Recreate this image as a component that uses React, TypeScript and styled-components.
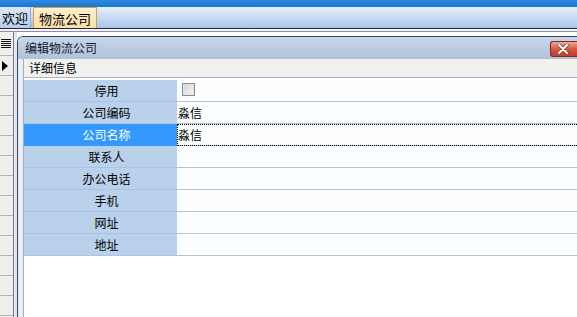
import React from 'react';
import styled, { createGlobalStyle, css } from 'styled-components';

const GlobalStyle = createGlobalStyle`
  html, body {
    margin: 0;
    padding: 0;
    width: 577px;
    height: 317px;
    overflow: hidden;
    background: #fff;
  }
  body {
    font-family: "Noto Sans CJK SC", "Liberation Sans", sans-serif;
    font-size: 12px;
    color: #000;
  }
  * { box-sizing: border-box; }
`;

const Page = styled.div`
  width: 577px;
  height: 317px;
  display: flex;
  flex-direction: column;
  overflow: hidden;
`;

const TopBand = styled.div`
  height: 7px;
  background: linear-gradient(#2f8be0, #1a76cf);
`;

const TabStrip = styled.div`
  height: 22px;
  display: flex;
  align-items: flex-end;
  background: linear-gradient(#e6effb, #a9c5eb);
  border-bottom: 1px solid #1b2a5a;
`;

const Tab = styled.div<{ $active?: boolean }>`
  height: 21px;
  padding: 0 2px;
  display: flex;
  align-items: center;
  font-size: 13px;
  line-height: 1;
  white-space: nowrap;
  ${(p) =>
    p.$active
      ? css`
          margin-left: 2px;
          padding: 0 5px;
          background: linear-gradient(#fff1cc, #fcdea4);
          border: 1px solid #d99a56;
          border-bottom: none;
        `
      : css`
          background: linear-gradient(#dce8f8, #b6cdee);
          border-right: 1px solid #8ea8cc;
        `}
`;

const Divider = styled.div`
  height: 3px;
  background: #fbf1f1;
  border-bottom: 1px solid #8a92a2;
`;

const Body = styled.div`
  flex: 1;
  display: flex;
  min-height: 0;
`;

const LeftPanel = styled.div`
  width: 14px;
  background: #efefef;
  border-right: 1px solid #7c7c7c;
  display: flex;
  flex-direction: column;
`;

const PanelCell = styled.div<{ $head?: boolean }>`
  height: ${(p) => (p.$head ? 24 : 20)}px;
  flex-shrink: 0;
  border-bottom: 1px solid #b4b4b4;
  display: flex;
  align-items: center;
  padding-left: 1px;
`;

const Splitter = styled.div`
  width: 3px;
  background: #dfe8f2;
`;

const MdiArea = styled.div`
  flex: 1;
  padding-top: 4px;
  background: #fff;
  display: flex;
  min-width: 0;
`;

const Dialog = styled.div`
  flex: 1;
  display: flex;
  flex-direction: column;
  border-left: 1px solid #3c4858;
  border-top: 1px solid #3c4858;
  border-top-left-radius: 6px;
  min-width: 0;
`;

const TitleBar = styled.div`
  height: 22px;
  flex-shrink: 0;
  display: flex;
  align-items: flex-start;
  justify-content: space-between;
  padding-left: 7px;
  border-top-left-radius: 5px;
  background: linear-gradient(#c9d7e9, #aec2da);
`;

const TitleText = styled.span`
  font-size: 12px;
  line-height: 22px;
  color: #0f1a2a;
`;

const CloseButton = styled.div`
  width: 27px;
  height: 16px;
  margin-top: 4px;
  display: flex;
  align-items: center;
  justify-content: center;
  border: 1px solid #7d2b1e;
  border-right: none;
  border-radius: 3px 0 0 3px;
  background: linear-gradient(#eeaa9c, #d4583f 50%, #bf3f2a);
  padding-right: 3px;
`;

const DialogBody = styled.div`
  flex: 1;
  display: flex;
  min-height: 0;
`;

const Frame = styled.div`
  width: 6px;
  background: #e8eff8;
  border-right: 1px solid #a2acba;
`;

const Content = styled.div`
  flex: 1;
  display: flex;
  flex-direction: column;
  background: #fff;
  min-width: 0;
`;

const GroupHeader = styled.div`
  height: 19px;
  flex-shrink: 0;
  padding-left: 5px;
  background: #f0f0ec;
  border-bottom: 1px solid #a9b4c4;
  font-size: 12px;
  line-height: 18px;
`;

/* the grid runs on past the window edge, as in the reference */
const Grid = styled.div`
  margin-top: 2px;
  margin-right: -12px;
  display: grid;
  grid-template-columns: 153px 1fr;
`;

const LabelCell = styled.div<{ $selected?: boolean }>`
  height: 22px;
  padding-left: 12px;
  text-align: center;
  line-height: 21px;
  background: ${(p) => (p.$selected ? '#3399ff' : '#b9d1ea')};
  color: ${(p) => (p.$selected ? '#fff' : '#000')};
  border-bottom: 1px solid ${(p) => (p.$selected ? '#3399ff' : '#a9c3e1')};
`;

const ValueCell = styled.div<{ $focused?: boolean }>`
  height: 22px;
  display: flex;
  align-items: center;
  padding-left: 1px;
  background: #fdfeff;
  border-bottom: 1px solid #b7c4d1;
  white-space: nowrap;
  ${(p) =>
    p.$focused &&
    css`
      outline: 1px dotted #000;
      outline-offset: -1px;
    `}
`;

const CheckBox = styled.span`
  width: 13px;
  height: 13px;
  margin-left: 4px;
  margin-top: -2px;
  border: 1px solid #8c8c8c;
  background: linear-gradient(135deg, #d4d4d4, #f6f6f6);
  box-shadow: inset 0 0 0 1px #e4e4e4;
`;

const MenuIcon = () => (
  <svg width="10" height="9" viewBox="0 0 10 9">
    {[0, 2, 4, 6, 8].map((y) => (
      <rect key={y} x="0" y={y} width="10" height="1" fill="#111" />
    ))}
  </svg>
);

const Arrow = () => (
  <svg width="8" height="10" viewBox="0 0 8 10">
    <polygon points="1,0 7,5 1,10" fill="#000" />
  </svg>
);

const CloseIcon = () => (
  <svg width="12" height="10" viewBox="0 0 12 10">
    <path d="M2 1 L10 9 M10 1 L2 9" stroke="#7a3a30" strokeWidth="3.2" strokeLinecap="round" />
    <path d="M2 1 L10 9 M10 1 L2 9" stroke="#fff" strokeWidth="2" strokeLinecap="round" />
  </svg>
);

const fields = [
  { label: '停用', value: null },
  { label: '公司编码', value: '淼信' },
  { label: '公司名称', value: '淼信', selected: true },
  { label: '联系人', value: '' },
  { label: '办公电话', value: '' },
  { label: '手机', value: '' },
  { label: '网址', value: '' },
  { label: '地址', value: '' },
];

export default function App() {
  return (
    <Page>
      <GlobalStyle />
      <TopBand />
      <TabStrip>
        <Tab>欢迎</Tab>
        <Tab $active>物流公司</Tab>
      </TabStrip>
      <Divider />
      <Body>
        <LeftPanel>
          <PanelCell $head>
            <MenuIcon />
          </PanelCell>
          <PanelCell>
            <Arrow />
          </PanelCell>
          {Array.from({ length: 12 }).map((_, i) => (
            <PanelCell key={i} />
          ))}
        </LeftPanel>
        <Splitter />
        <MdiArea>
          <Dialog>
            <TitleBar>
              <TitleText>编辑物流公司</TitleText>
              <CloseButton>
                <CloseIcon />
              </CloseButton>
            </TitleBar>
            <DialogBody>
              <Frame />
              <Content>
                <GroupHeader>详细信息</GroupHeader>
                <Grid>
                  {fields.map((f) => (
                    <React.Fragment key={f.label}>
                      <LabelCell $selected={f.selected}>{f.label}</LabelCell>
                      <ValueCell $focused={f.selected}>
                        {f.value === null ? <CheckBox /> : f.value}
                      </ValueCell>
                    </React.Fragment>
                  ))}
                </Grid>
              </Content>
            </DialogBody>
          </Dialog>
        </MdiArea>
      </Body>
    </Page>
  );
}
